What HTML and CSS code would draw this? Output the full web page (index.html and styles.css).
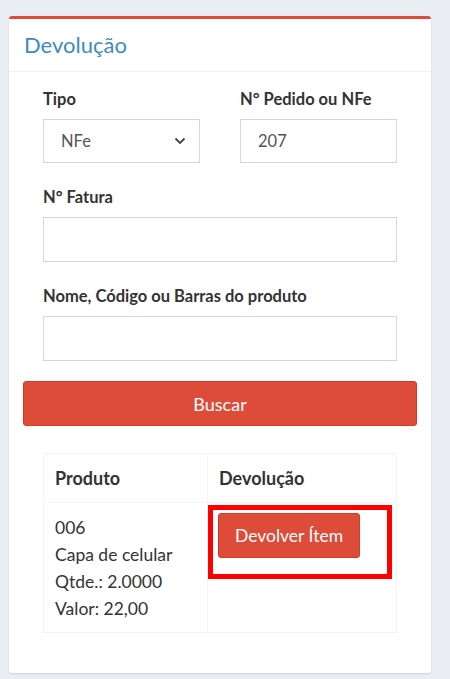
FILE: index.html
```html
<!DOCTYPE html>
<html lang="pt-BR">
<head>
<meta charset="utf-8">
<title>Devolução</title>
<link rel="stylesheet" href="styles.css">
</head>
<body>
<div class="page">
  <div class="box">
    <div class="box-header">
      <h3 class="box-title">Devolução</h3>
    </div>
    <div class="box-body">
      <div class="row">
        <div class="col">
          <label class="lbl">Tipo</label>
          <div class="select">
            <span>NFe</span>
            <svg class="chev" width="12" height="8" viewBox="0 0 12 8"><path d="M1.5 1.5 L6 6 L10.5 1.5" fill="none" stroke="#444" stroke-width="1.8"/></svg>
          </div>
        </div>
        <div class="col">
          <label class="lbl">N° Pedido ou NFe</label>
          <div class="input short">207</div>
        </div>
      </div>
      <div class="group">
        <label class="lbl">N° Fatura</label>
        <div class="input"></div>
      </div>
      <div class="group group-last">
        <label class="lbl">Nome, Código ou Barras do produto</label>
        <div class="input"></div>
      </div>
      <button class="btn btn-block">Buscar</button>
      <div class="table-wrap">
        <table class="table">
          <colgroup><col class="c1"><col></colgroup>
          <thead>
            <tr><th>Produto</th><th>Devolução</th></tr>
          </thead>
          <tbody>
            <tr>
              <td class="prod">006<br>Capa de celular<br>Qtde.: 2.0000<br>Valor: 22,00</td>
              <td class="act">
                <button class="btn btn-item">Devolver Ítem</button>
                <div class="mark"></div>
              </td>
            </tr>
          </tbody>
        </table>
      </div>
    </div>
  </div>
</div>
</body>
</html>
```
FILE: styles.css
```css
* { box-sizing: border-box; }
html, body { margin: 0; padding: 0; }
body {
  background: #eaedf2;
  font-family: "Lato", "Noto Sans", sans-serif;
  color: #333;
  width: 450px;
  height: 679px;
  overflow: hidden;
}
.page { padding: 16px 19px 0 9px; }
.box {
  background: #fff;
  border-top: 3px solid #dd4b39;
  border-radius: 3px;
  box-shadow: 0 1px 2px rgba(0,0,0,0.12);
  height: 657px;
}
.box-header {
  padding: 11px 15px;
  border-bottom: 1px solid #f0f0f0;
  height: 53px;
}
.box-title {
  margin: 0;
  font-size: 22px;
  line-height: 30px;
  font-weight: 400;
  color: #3c8dbc;
}
.box-body { padding: 15px 14px; }
.row { display: flex; }
.col { flex: 1; padding: 0 20px; margin-bottom: 22px; }
.group { padding: 0 20px; margin-bottom: 22px; }
.group-last { margin-bottom: 20px; }
.lbl {
  display: block;
  font-weight: 700;
  font-size: 16.5px;
  line-height: 24px;
  margin-bottom: 8px;
  color: #333;
}
.select, .input {
  height: 45px;
  border: 1px solid #d2d6de;
  padding: 0 17px;
  display: flex;
  align-items: center;
  font-size: 16.5px;
  color: #555;
}
.select, .input.short { height: 44px; }
.select { justify-content: space-between; padding-right: 13px; }
.chev { display: block; }
.btn {
  font-family: inherit;
  background: #dd4b39;
  border: 1px solid #d73925;
  border-radius: 3px;
  color: #fff;
  cursor: pointer;
}
.btn-block {
  display: block;
  width: 100%;
  height: 45px;
  font-size: 18px;
  margin-bottom: 27px;
}
.table-wrap { padding: 0 20px; }
.table {
  width: 100%;
  border-collapse: collapse;
  table-layout: fixed;
  border: 1px solid #f4f4f4;
}
.c1 { width: 164px; }
.table th, .table td {
  border: 1px solid #f4f4f4;
  text-align: left;
  vertical-align: top;
}
.table th {
  font-size: 18px;
  font-weight: 700;
  padding: 12px 11px;
  line-height: 24px;
  height: 49px;
}
.table td { font-size: 17.5px; line-height: 27px; }
.prod { padding: 11px 11px 10px; }
.act { position: relative; padding: 10px 10px; }
.btn-item {
  height: 45px;
  padding: 0 16px;
  font-size: 17.5px;
}
.mark {
  position: absolute;
  left: 0;
  top: 2px;
  width: 184px;
  height: 74px;
  border: 5px solid #ff0000;
  pointer-events: none;
}
```
